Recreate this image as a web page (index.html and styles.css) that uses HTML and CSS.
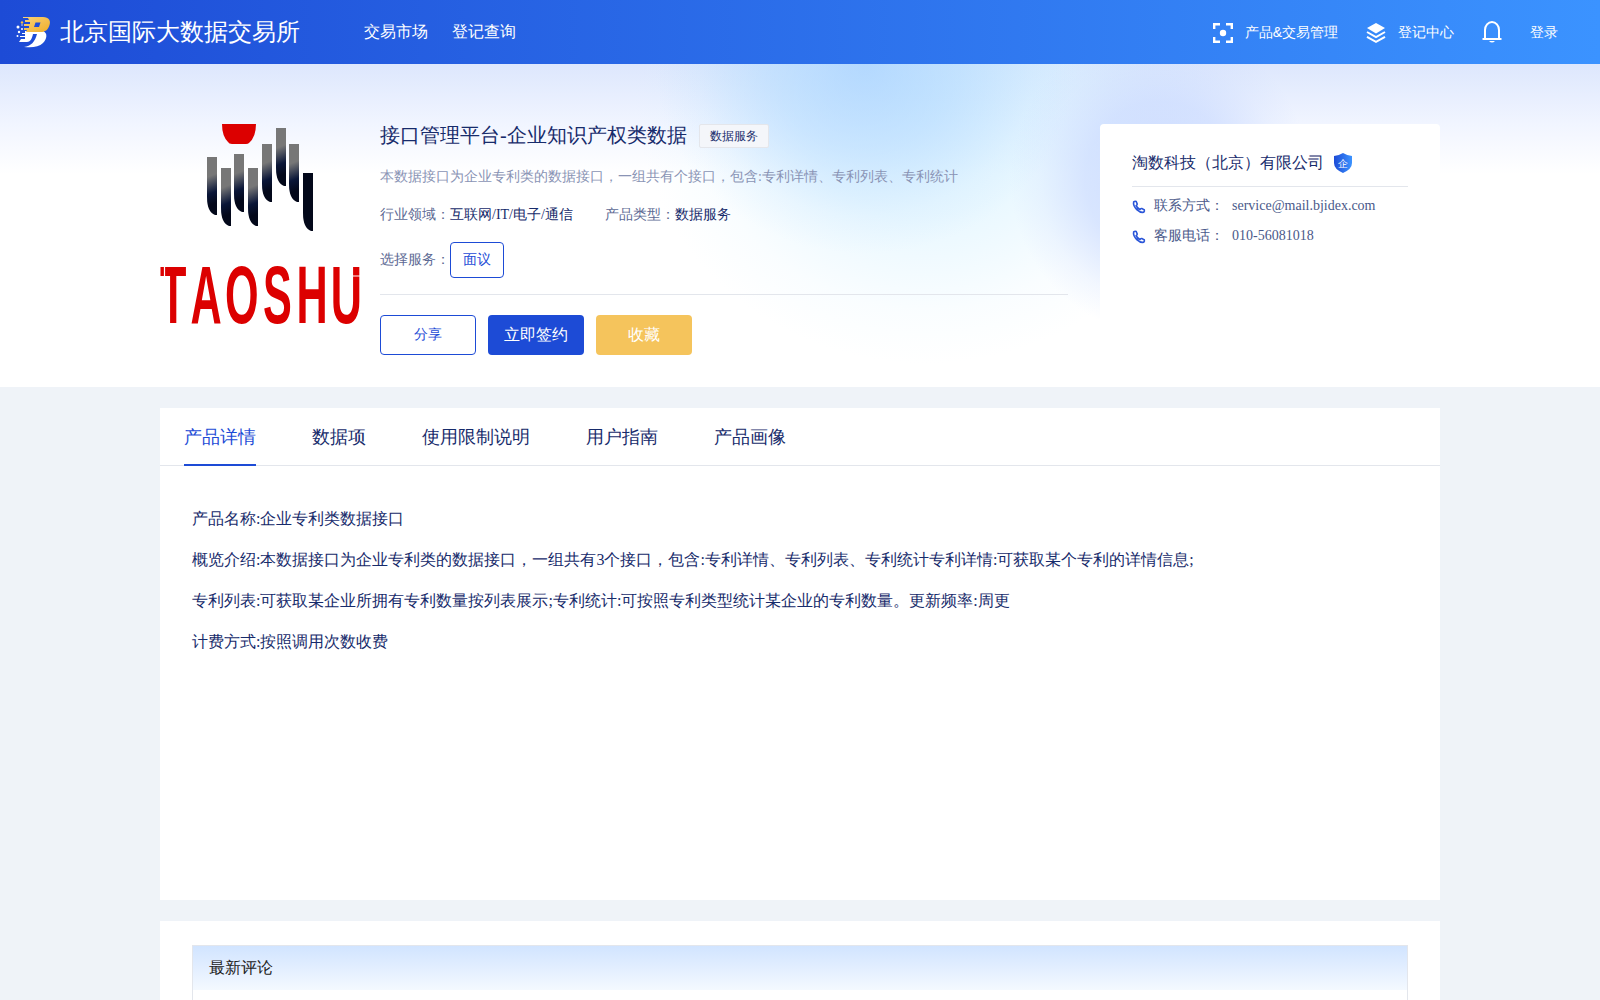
FILE: index.html
```
<!DOCTYPE html>
<html lang="en">
<head>
    <meta charset="UTF-8">
    <meta name="viewport" content="width=device-width, initial-scale=1.0">
    <title>北京国际大数据交易所</title>
    <link rel="stylesheet" href="styles.css">
</head>
<body>
    <header class="header">
        <div class="brand">
            <svg class="brand-logo" width="36" height="32" viewBox="0 0 36 32">
                <defs>
                    <linearGradient id="gold" x1="0" y1="0" x2="1" y2="1">
                        <stop offset="0" stop-color="#f8d27a"/>
                        <stop offset="1" stop-color="#f0ae28"/>
                    </linearGradient>
                </defs>
                <path fill="#fff" d="M9 15H27C32 17 31 23 27 27C23 31 16 32 8 31C15 30 19 26 21 18H17C16 23 14 26 11 26H3L5 23H9V21H4V20H9V18H6V17H9Z"/>
                <path fill="url(#gold)" fill-rule="evenodd" d="M7 1H27C33 1 35 5 33.500 9C32 14 29 16 25 16H10L11 14H8V12H13V10H8V8H14V6H9V4H13L12 2H7ZM19.500 6.500L18 11H23L24.500 6.500Z"/>
                <g fill="#fff">
                    <circle cx="2" cy="11" r="1.500"/>
                    <circle cx="3" cy="16" r="1.200"/>
                    <circle cx="1.500" cy="20" r="1"/>
                    <circle cx="6" cy="13" r="1"/>
                    <circle cx="6" cy="9" r=".7"/>
                </g>
                <circle cx="6" cy="6.500" r="1.200" fill="#f4be48"/>
            </svg>
            <span class="brand-name">北京国际大数据交易所</span>
        </div>
        <nav class="nav">
            <a>交易市场</a>
            <a>登记查询</a>
        </nav>
        <div class="tools">
            <a class="tool">
                <svg width="20" height="22" viewBox="0 0 20 22">
                    <path fill="none" stroke="#fff" stroke-width="2.400" d="M1.200 8V3.200H7M13 3.200H18.800V8M18.800 16V20.800H13M7 20.800H1.200V16"/>
                    <circle cx="10" cy="12" r="3.200" fill="#fff"/>
                </svg>
                <span>产品&amp;交易管理</span>
            </a>
            <a class="tool">
                <svg width="20" height="22" viewBox="0 0 20 22">
                    <path fill="#fff" d="M10 2L19 7L10 12.500L1 7Z"/>
                    <path fill="none" stroke="#fff" stroke-width="2" d="M1 11L10 16L19 11M1 15.800L10 20.800L19 15.800"/>
                </svg>
                <span>登记中心</span>
            </a>
            <svg class="bell" width="20" height="24" viewBox="0 0 20 24">
                <path fill="none" stroke="#fff" stroke-width="2" d="M3 18.500V10A7 8 0 0 1 17 10V18.500M.5 19H19.500"/>
                <path fill="#fff" d="M7 21H13Q10 24 7 21Z"/>
            </svg>
            <a class="login">登录</a>
        </div>
    </header>

    <section class="hero">
        <div class="hero-inner">
            <svg class="product-logo" width="200" height="200" viewBox="0 0 200 200">
                <defs>
                    <linearGradient id="steel" x1="0" y1="0" x2="0.070" y2="1">
                        <stop offset="0.350" stop-color="#777"/>
                        <stop offset="0.650" stop-color="#0a1638"/>
                        <stop offset="0.850" stop-color="#03081a"/>
                    </linearGradient>
                    <path id="bar" d="M0 0H10V58H8Q0 55 0 40Z"/>
                </defs>
                <path fill="#dc0000" d="M62 0H96Q96 13 89 19Q88 20 86 20H72Q69 20 68 18Q62 12 62 0Z"/>
                <g fill="url(#steel)">
                    <use href="#bar" x="47" y="33"/>
                    <use href="#bar" x="61" y="44"/>
                    <use href="#bar" x="74" y="30"/>
                    <use href="#bar" x="88" y="44"/>
                    <use href="#bar" x="102" y="20"/>
                    <use href="#bar" x="116" y="4"/>
                    <use href="#bar" x="129" y="20"/>
                </g>
                <use href="#bar" x="143" y="49" fill="#03081a"/>
                <g class="product-logo-text" transform="translate(0 198.500) scale(.9 1.680)">
                    <text x="14.600 51.100 91 130.500 169 207" y="0">TAOSHU</text>
                </g>
                <path class="product-logo-cut" d="M4.500 142V153M193 152H200"/>
            </svg>

            <div class="product">
                <div class="product-head">
                    <h1>接口管理平台-企业知识产权类数据</h1>
                    <span class="tag">数据服务</span>
                </div>
                <p class="product-desc">本数据接口为企业专利类的数据接口，一组共有个接口，包含:专利详情、专利列表、专利统计</p>
                <div class="product-attrs">
                    <div>行业领域：<b>互联网/IT/电子/通信</b></div>
                    <div>产品类型：<b>数据服务</b></div>
                </div>
                <div class="product-service">
                    <span>选择服务：</span>
                    <span class="option">面议</span>
                </div>
                <div class="actions">
                    <button class="btn btn-share">分享</button>
                    <button class="btn btn-sign">立即签约</button>
                    <button class="btn btn-fav">收藏</button>
                </div>
            </div>

            <aside class="company">
                <div class="company-name">
                    <span>淘数科技（北京）有限公司</span>
                    <svg width="18" height="20" viewBox="0 0 18 20">
                        <defs>
                            <linearGradient id="shield">
                                <stop offset="0" stop-color="#1d4bd6"/>
                                <stop offset="1" stop-color="#3b93ff"/>
                            </linearGradient>
                        </defs>
                        <path fill="url(#shield)" d="M9 0Q13 2.500 18 3V10Q18 16 9 20Q0 16 0 10V3Q5 2.500 9 0Z"/>
                        <text class="shield-text" x="9" y="13.500" text-anchor="middle">企</text>
                    </svg>
                </div>
                <div class="contact">
                    <svg width="14" height="16" viewBox="0 0 14 16">
                        <path class="phone" d="M1.700 3.800Q3 2.800 4.200 3.500L5.200 6Q5.300 6.800 4.200 7.600Q5.200 10.200 8 11.500Q9 10.300 9.800 10.600L12.300 11.800Q12.800 13 11.700 14.300Q8.500 15 4.800 11.600Q.8 7.500 1.700 3.800Z"/>
                    </svg>
                    <span class="contact-label">联系方式：</span>
                    <span>service@mail.bjidex.com</span>
                </div>
                <div class="contact">
                    <svg width="14" height="16" viewBox="0 0 14 16">
                        <path class="phone" d="M1.700 3.800Q3 2.800 4.200 3.500L5.200 6Q5.300 6.800 4.200 7.600Q5.200 10.200 8 11.500Q9 10.300 9.800 10.600L12.300 11.800Q12.800 13 11.700 14.300Q8.500 15 4.800 11.600Q.8 7.500 1.700 3.800Z"/>
                    </svg>
                    <span class="contact-label">客服电话：</span>
                    <span>010-56081018</span>
                </div>
            </aside>
        </div>
    </section>

    <main>
        <section class="panel detail">
            <div class="tabs">
                <a class="tab active">产品详情</a>
                <a class="tab">数据项</a>
                <a class="tab">使用限制说明</a>
                <a class="tab">用户指南</a>
                <a class="tab">产品画像</a>
            </div>
            <div class="detail-body">
                <p>产品名称:企业专利类数据接口</p>
                <p>概览介绍:本数据接口为企业专利类的数据接口，一组共有3个接口，包含:专利详情、专利列表、专利统计专利详情:可获取某个专利的详情信息;</p>
                <p>专利列表:可获取某企业所拥有专利数量按列表展示;专利统计:可按照专利类型统计某企业的专利数量。更新频率:周更</p>
                <p>计费方式:按照调用次数收费</p>
            </div>
        </section>

        <section class="panel comments">
            <div class="comments-box">
                <h2>最新评论</h2>
            </div>
        </section>
    </main>
</body>
</html>
```
FILE: styles.css
```
* {
    box-sizing: border-box;
}
body {
    font-family: "Liberation Serif", serif;
    font-size: 14px;
    margin: 0;
    background-color: #eff3f8;
    color: #172b6b;
}
h1, h2, p {
    margin: 0;
    font-weight: normal;
}
svg {
    display: block;
    flex: none;
    overflow: visible;
}
.header {
    display: flex;
    align-items: center;
    height: 64px;
    padding: 0 42px 0 16px;
    background: linear-gradient(90deg, #1d4bd6, #3b93ff);
    color: white;
    font-family: "Liberation Sans", sans-serif;
}
.brand {
    display: flex;
    align-items: center;
    gap: 8px;
    width: 348px;
}
.brand-name {
    font-size: 24px;
}
.nav {
    display: flex;
    gap: 24px;
    font-size: 16px;
}
.tools {
    display: flex;
    align-items: center;
    gap: 28px;
    margin-left: auto;
}
.tool {
    display: flex;
    align-items: center;
    gap: 12px;
}
.tool span, .login {
    padding-top: 2px;
}
.hero {
    height: 323px;
    padding-top: 60px;
    background:
        radial-gradient(ellipse 150px 155px at 1160px 115px, rgba(200, 217, 255, 0.9), rgba(200, 217, 255, 0.65) 50%, rgba(200, 217, 255, 0.2) 80%, rgba(200, 217, 255, 0)),
        radial-gradient(ellipse 210px 190px at 865px 0, rgba(165, 208, 255, 0.7), rgba(165, 208, 255, 0.4) 45%, rgba(165, 208, 255, 0.1) 80%, rgba(165, 208, 255, 0)),
        radial-gradient(ellipse 290px 270px at 925px 30px, rgba(210, 240, 255, 0.75), rgba(210, 240, 255, 0.5) 45%, rgba(210, 240, 255, 0.12) 80%, rgba(210, 240, 255, 0)),
        linear-gradient(#dde7fd, #f1f5ff 60px, #ffffff 110px);
}
.hero-inner {
    display: flex;
    width: 1280px;
    margin: 0 auto;
}
.product {
    width: 688px;
    margin-left: 20px;
}
.product-head {
    display: flex;
    align-items: center;
    gap: 12px;
    height: 24px;
}
.product-head h1 {
    font-size: 20px;
    line-height: 24px;
    margin-top: -2px;
}
.tag {
    height: 24px;
    padding: 0 10px;
    border: 1px solid #e4e6eb;
    border-radius: 2px;
    background-color: #f4f6fa;
    font-size: 12px;
    line-height: 22px;
}
.product-desc {
    margin-top: 19px;
    line-height: 20px;
    color: #8a94b5;
}
.product-attrs {
    display: flex;
    gap: 32px;
    margin-top: 18px;
    line-height: 20px;
    color: #5d6a94;
}
.product-attrs b {
    font-weight: normal;
    color: #172b6b;
}
.product-service {
    display: flex;
    align-items: center;
    margin-top: 17px;
    padding-bottom: 16px;
    border-bottom: 1px solid #e3e6ec;
    color: #5d6a94;
}
.option {
    width: 54px;
    height: 36px;
    border: 1px solid #1d4bd6;
    border-radius: 4px;
    background-color: white;
    color: #1d4bd6;
    line-height: 34px;
    text-align: center;
}
.actions {
    display: flex;
    gap: 12px;
    margin-top: 20px;
}
.btn {
    width: 96px;
    height: 40px;
    padding: 0;
    border: none;
    border-radius: 4px;
    color: white;
    font-family: inherit;
    font-size: 16px;
}
.btn-share {
    border: 1px solid #1d4bd6;
    background-color: white;
    color: #1d4bd6;
    font-size: 14px;
}
.btn-sign {
    background-color: #1d4bd6;
}
.btn-fav {
    background-color: #f5c45c;
}
.company {
    width: 340px;
    height: 231px;
    margin-left: 32px;
    padding: 16px 32px 0;
    border-radius: 4px;
    background-color: white;
}
.company-name {
    display: flex;
    align-items: center;
    gap: 10px;
    height: 47px;
    margin-bottom: 4px;
    border-bottom: 1px solid #e3e6ec;
    font-size: 16px;
}
.shield-text {
    fill: white;
    font-size: 10px;
}
.contact {
    display: flex;
    align-items: center;
    height: 30px;
    color: #4a598a;
}
.contact-label {
    margin: 0 8px;
}
.phone {
    fill: none;
    stroke: #2a55d8;
    stroke-width: 1.6;
}
.product-logo-text {
    fill: #dc0000;
    font-family: "Liberation Sans", sans-serif;
    font-size: 48px;
    font-weight: bold;
    text-anchor: middle;
}
.product-logo-cut {
    fill: none;
    stroke: white;
    stroke-width: 1.2;
}
.panel {
    width: 1280px;
    margin: 21px auto 0;
    background-color: white;
}
.detail {
    height: 492px;
}
.tabs {
    display: flex;
    gap: 56px;
    height: 58px;
    padding: 0 24px;
    border-bottom: 1px solid #e3e6ec;
    font-size: 18px;
    line-height: 58px;
}
.tab.active {
    height: 58px;
    border-bottom: 2px solid #1d4bd6;
    color: #1d4bd6;
}
.detail-body {
    padding: 32px;
    font-size: 16px;
    line-height: 41px;
}
.comments {
    padding: 24px 32px 0;
}
.comments-box {
    height: 55px;
    border: 1px solid #e3e6ec;
    border-bottom: none;
}
.comments-box h2 {
    height: 44px;
    padding-left: 16px;
    background: linear-gradient(#d1e4ff, #f4f9ff);
    color: #222;
    font-size: 16px;
    line-height: 44px;
}
```
